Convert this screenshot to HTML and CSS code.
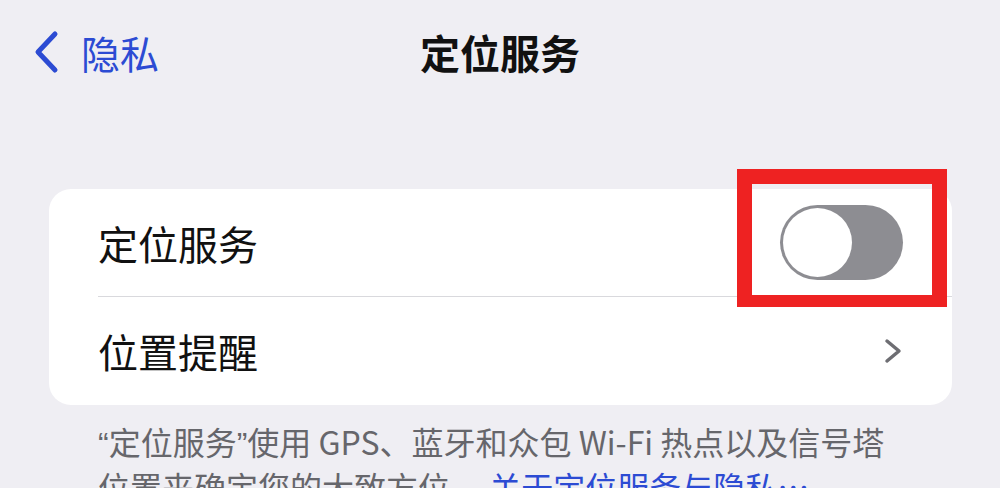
FILE: index.html
```html
<!DOCTYPE html>
<html lang="zh-CN">
<head>
    <meta charset="UTF-8">
    <meta name="viewport" content="width=device-width, initial-scale=1.0">
    <title>定位服务</title>
    <link rel="stylesheet" href="styles.css">
</head>
<body>

    <header class="navbar">
        <a class="back" href="#">
            <svg class="back-icon" width="28" height="44" viewBox="0 0 28 44">
                <path d="M22 4 L5 22 L22 40" fill="none" stroke="#2c4bd3" stroke-width="5" stroke-linecap="round" stroke-linejoin="round"/>
            </svg>
            <span>隐私</span>
        </a>
        <h1 class="title">定位服务</h1>
        <div></div>
    </header>

    <div class="card">
        <div class="row row-first">
            <span class="label">定位服务</span>
            <div class="toggle">
                <div class="knob"></div>
                <div class="highlight"></div>
            </div>
        </div>
        <div class="row">
            <span class="label">位置提醒</span>
            <svg class="chevron" width="20" height="26" viewBox="0 0 20 26">
                <path d="M4 3 L16 13 L4 23" fill="none" stroke="#6e6e73" stroke-width="3.5" stroke-linecap="round" stroke-linejoin="round"/>
            </svg>
        </div>
    </div>

    <p class="footer"><span class="quote">“</span>定位服务<span class="quote">”</span>使用 GPS、蓝牙和众包 Wi-Fi 热点以及信号塔位置来确定您的大致方位。 <a href="#">关于定位服务与隐私…</a></p>

</body>
</html>
```

FILE: styles.css
```css
body {
    font-family: "Noto Sans CJK SC", "Noto Sans", sans-serif;
    margin: 0;
    background-color: #efeef3;
    color: #111;
    overflow: hidden;
}

.navbar {
    display: grid;
    grid-template-columns: 1fr auto 1fr;
    align-items: center;
    height: 104px;
    padding: 0 33px;
}

.back {
    display: flex;
    align-items: center;
    gap: 20px;
    color: #2c4bd3;
    text-decoration: none;
    font-size: 39px;
}

.title {
    margin: 0;
    font-size: 40px;
    font-weight: 700;
}

.card {
    margin: 85px 48px 0 49px;
    background-color: #fff;
    border-radius: 22px;
}

.row {
    display: flex;
    align-items: center;
    justify-content: space-between;
    height: 108px;
    margin-left: 49px;
    padding-right: 49px;
}

.row-first {
    height: 107px;
    border-bottom: 1px solid #d9d9dd;
}

.label {
    font-size: 40px;
}

.toggle {
    position: relative;
    width: 123px;
    height: 75px;
    border-radius: 38px;
    background-color: #8d8d92;
    padding: 3px;
    box-sizing: border-box;
}

.knob {
    width: 69px;
    height: 69px;
    border-radius: 50%;
    background-color: #fff;
}

.highlight {
    position: absolute;
    left: -43px;
    top: -36px;
    width: 210px;
    height: 138px;
    border: 15px solid #ee2222;
    border-bottom-width: 12px;
    box-sizing: border-box;
}

.chevron {
    display: block;
}

.footer {
    margin: 15px 100px 0 98px;
    font-size: 32px;
    line-height: 42px;
    color: #66666b;
}

.footer .quote {
    font-family: "Liberation Sans", sans-serif;
}

.footer a {
    color: #2c4bd3;
    text-decoration: none;
}
```
